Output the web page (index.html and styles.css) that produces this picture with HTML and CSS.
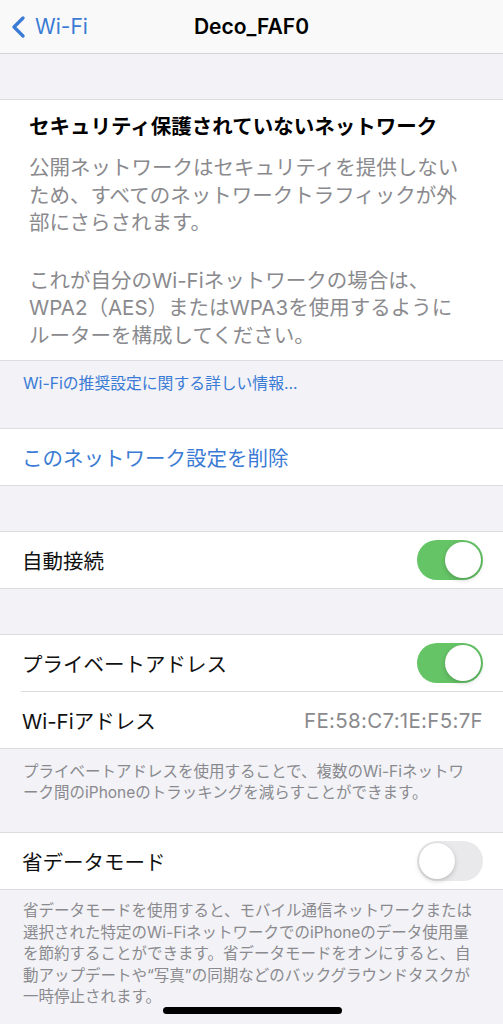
FILE: index.html
```html
<!DOCTYPE html>
<html lang="ja">

<head>
    <meta charset="UTF-8">
    <meta name="viewport" content="width=device-width, initial-scale=1.0">
    <title>Deco_FAF0</title>
    <link rel="stylesheet" href="styles.css">
</head>

<body>
    <header class="nav-bar">
        <a class="back-link" href="#">
            <svg class="back-chevron" width="16" height="22" viewBox="0 0 16 22">
                <path d="M13 2 L4 11 L13 20" fill="none" stroke="currentColor" stroke-width="3.2" stroke-linecap="round" stroke-linejoin="round" />
            </svg>
            <span>Wi-Fi</span>
        </a>
        <h1 class="nav-title">Deco_FAF0</h1>
    </header>

    <main>
        <section class="group warning">
            <h2 class="warning-title">セキュリティ保護されていないネットワーク</h2>
            <p class="warning-text">公開ネットワークはセキュリティを提供しない<br>ため、すべてのネットワークトラフィックが外<br>部にさらされます。</p>
            <p class="warning-text">これが自分のWi-Fiネットワークの場合は、<br>WPA2（AES）またはWPA3を使用するように<br>ルーターを構成してください。</p>
        </section>
        <div class="info-link">Wi-Fiの推奨設定に関する詳しい情報...</div>

        <section class="group">
            <div class="row row-action">このネットワーク設定を削除</div>
        </section>

        <div class="spacer"></div>
        <section class="group">
            <div class="row">
                <span>自動接続</span>
                <span class="switch on"></span>
            </div>
        </section>

        <div class="spacer"></div>
        <section class="group">
            <div class="row">
                <span>プライベートアドレス</span>
                <span class="switch on"></span>
            </div>
            <div class="row">
                <span>Wi-Fiアドレス</span>
                <span class="row-value">FE:58:C7:1E:F5:7F</span>
            </div>
        </section>
        <p class="group-footer spaced">プライベートアドレスを使用することで、複数のWi-Fiネットワ<br>ーク間のiPhoneのトラッキングを減らすことができます。</p>

        <section class="group">
            <div class="row">
                <span>省データモード</span>
                <span class="switch"></span>
            </div>
        </section>
        <p class="group-footer">省データモードを使用すると、モバイル通信ネットワークまたは<br>選択された特定のWi-FiネットワークでのiPhoneのデータ使用量<br>を節約することができます。省データモードをオンにすると、自<br>動アップデートや“写真”の同期などのバックグラウンドタスクが<br>一時停止されます。</p>
    </main>

    <div class="home-indicator"></div>
</body>

</html>
```

FILE: styles.css
```css
/* Global */
* {
    box-sizing: border-box;
}

body {
    margin: 0;
    min-height: 100vh;
    background-color: #f2f2f7;
    font-family: Inter, "Noto Sans CJK JP", sans-serif;
    color: #111111;
}

/* Navigation bar */
.nav-bar {
    position: relative;
    height: 54px;
    display: flex;
    align-items: center;
    justify-content: center;
    background-color: #f9f9f9;
    border-bottom: 1px solid #d4d4d8;
}

.back-link {
    position: absolute;
    left: 10px;
    top: 0;
    bottom: 1px;
    display: flex;
    align-items: center;
    gap: 9px;
    color: #3a7bd5;
    text-decoration: none;
    font-size: 21px;
}

.back-chevron {
    margin-top: 2px;
}

.nav-title {
    margin: 0;
    font-size: 21px;
    font-weight: 600;
    color: #000000;
}

main {
    padding-top: 45px;
}

/* Grouped sections */
.group {
    background-color: #ffffff;
    border-top: 1px solid #dcdce0;
    border-bottom: 1px solid #dcdce0;
}

.spacer {
    height: 45px;
}

/* Warning block */
.warning {
    padding: 13px 10px 11px 29px;
}

.warning-title {
    margin: 0;
    font-size: 20.5px;
    line-height: 28px;
    font-weight: 700;
    color: #000000;
    white-space: nowrap;
}

.warning-text {
    margin: 13px 0 0;
    font-size: 20.5px;
    line-height: 27.5px;
    color: #8a8a8e;
    white-space: nowrap;
}

.warning-text + .warning-text {
    margin-top: 30px;
}

.info-link {
    height: 67px;
    padding: 13px 0 0 23px;
    font-size: 15.8px;
    line-height: 20px;
    color: #3a7bd5;
}

/* Rows */
.row {
    height: 56px;
    display: flex;
    align-items: center;
    justify-content: space-between;
    padding: 0 20px 0 22px;
    font-size: 20.5px;
}

.row + .row {
    height: 57px;
    border-top: 1px solid #dcdce0;
    margin-left: 21px;
    padding-left: 1px;
}

.row-action {
    color: #3a7bd5;
}

.row-value {
    color: #8a8a8e;
    letter-spacing: 0.3px;
}

/* Switch */
.switch {
    position: relative;
    width: 66px;
    height: 40px;
    border-radius: 20px;
    background-color: #e9e9eb;
}

.switch::after {
    content: "";
    position: absolute;
    top: 2px;
    left: 2px;
    width: 36px;
    height: 36px;
    border-radius: 50%;
    background-color: #ffffff;
    box-shadow: 0 2px 5px rgba(0, 0, 0, 0.18), 0 0 1px rgba(0, 0, 0, 0.12);
}

.switch.on {
    background-color: #65c466;
}

.switch.on::after {
    left: 28px;
}

/* Footers */
.group-footer {
    margin: 0;
    padding: 10px 0 12px 23px;
    font-size: 15.5px;
    line-height: 21.5px;
    color: #8a8a8e;
    white-space: nowrap;
}

.group-footer.spaced {
    padding: 12px 0 29px 23px;
    line-height: 21px;
}

.home-indicator {
    position: fixed;
    left: 163px;
    bottom: 10px;
    width: 179px;
    height: 7px;
    border-radius: 4px;
    background-color: #000000;
}
```
